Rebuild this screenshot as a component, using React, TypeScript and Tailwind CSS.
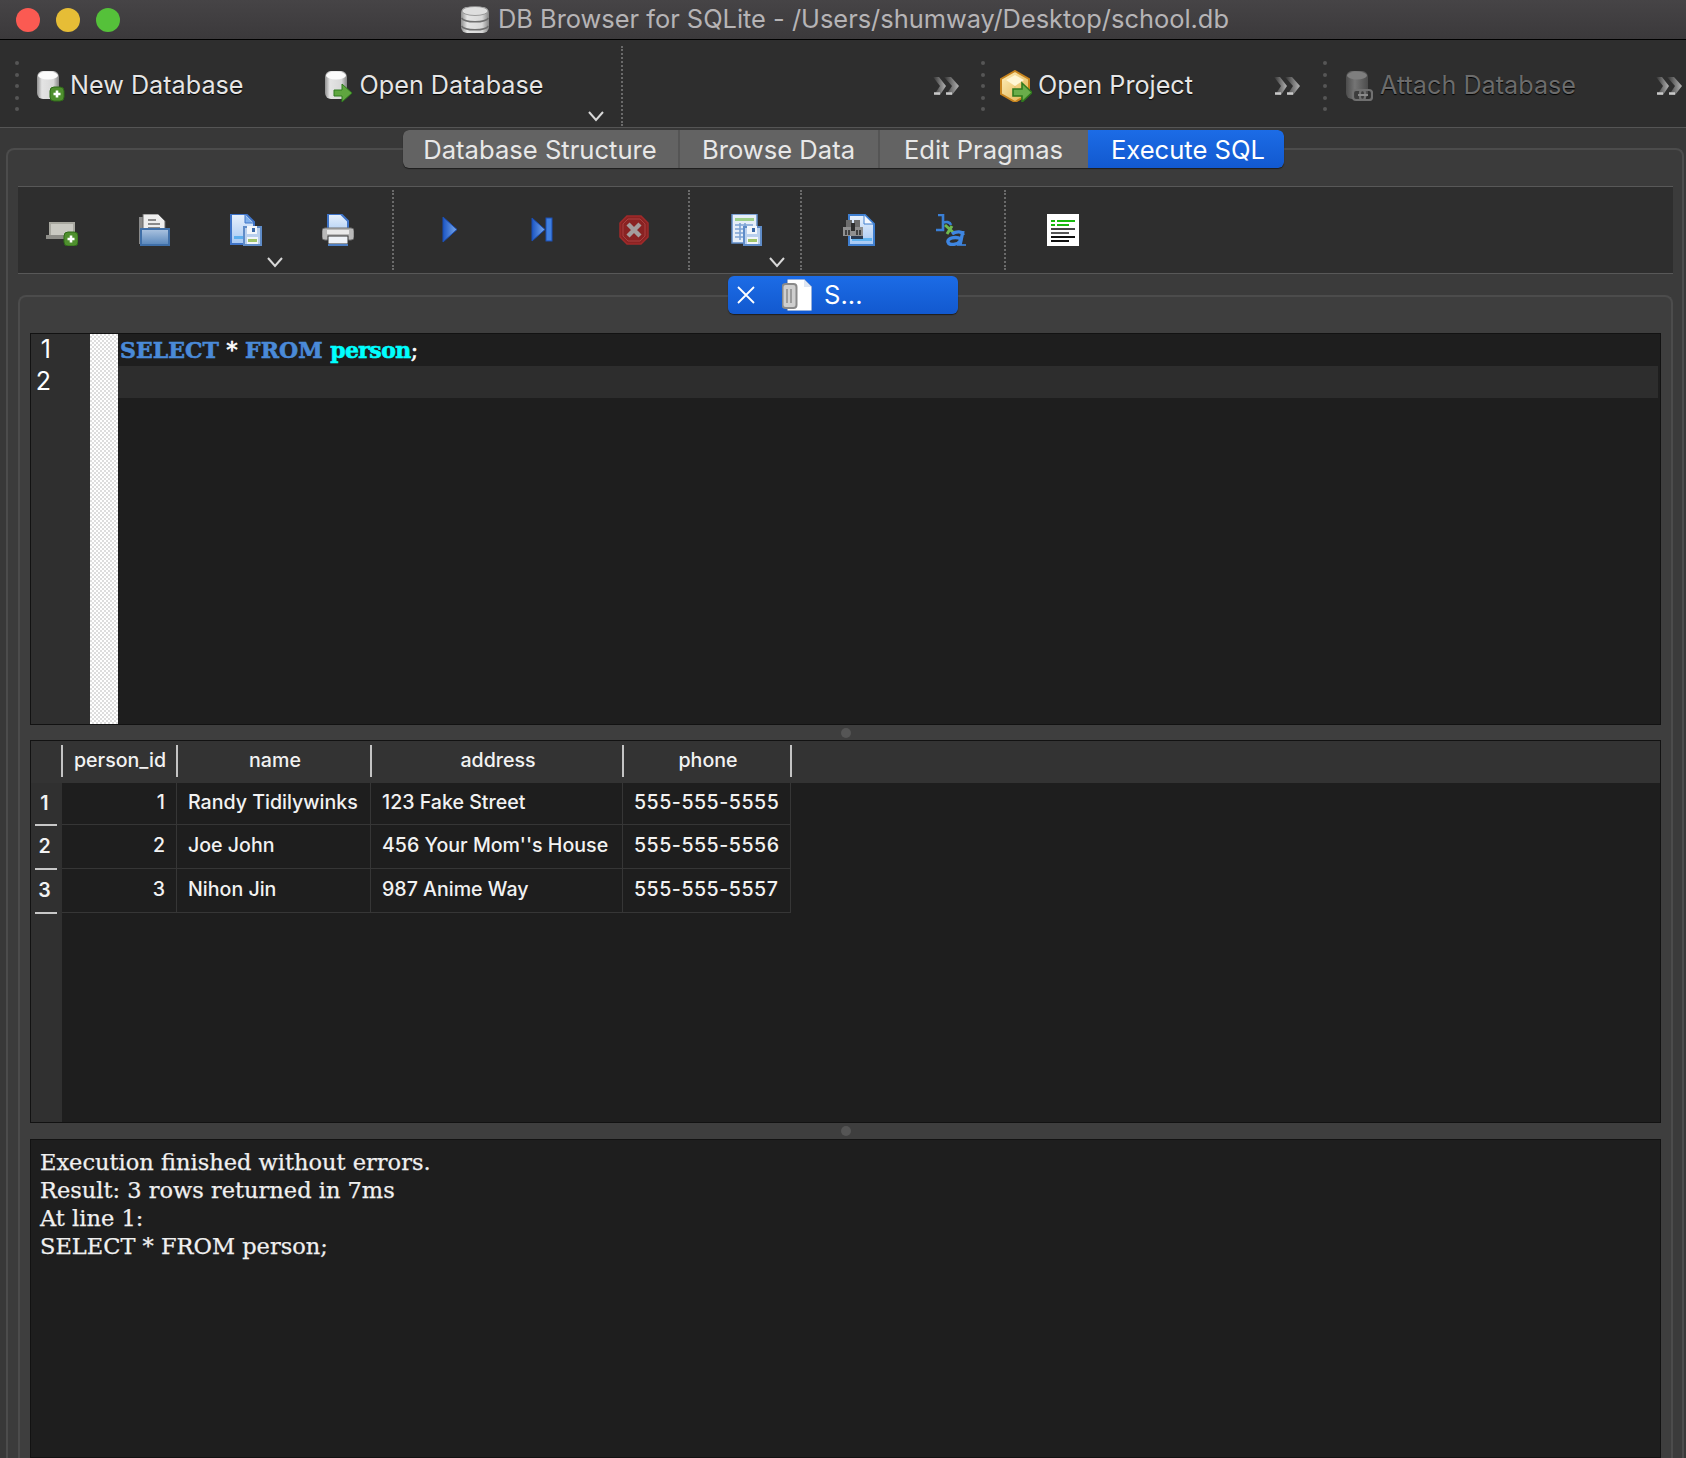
import React from "react";

const Defs = () => (
  <svg width="0" height="0" className="block h-0 w-0">
    <defs>
      <linearGradient id="cyl" x1="0" x2="1" y1="0" y2="0">
        <stop offset="0" stopColor="#8f8f8f" />
        <stop offset="0.22" stopColor="#e4e4e4" />
        <stop offset="0.75" stopColor="#d8d8d8" />
        <stop offset="1" stopColor="#858585" />
      </linearGradient>
      <linearGradient id="cylDim" x1="0" x2="1" y1="0" y2="0">
        <stop offset="0" stopColor="#4c4c4c" />
        <stop offset="0.4" stopColor="#757575" />
        <stop offset="1" stopColor="#4c4c4c" />
      </linearGradient>
      <linearGradient id="blueDoc" x1="0" x2="0" y1="0" y2="1">
        <stop offset="0" stopColor="#e8f1fc" />
        <stop offset="1" stopColor="#a6c8f3" />
      </linearGradient>
      <linearGradient id="panel" x1="0" x2="0" y1="0" y2="1">
        <stop offset="0" stopColor="#a7c0de" />
        <stop offset="1" stopColor="#5d8abd" />
      </linearGradient>
      <linearGradient id="play" x1="0" x2="1" y1="0" y2="0">
        <stop offset="0" stopColor="#1c56c4" />
        <stop offset="1" stopColor="#79a9ec" />
      </linearGradient>
      <linearGradient id="dbl" x1="0" x2="1" y1="0" y2="0">
        <stop offset="0" stopColor="#303030" />
        <stop offset="1" stopColor="#b4b4b4" />
      </linearGradient>
      <linearGradient id="pkg" x1="0" x2="1" y1="0" y2="1">
        <stop offset="0" stopColor="#fff0bd" />
        <stop offset="1" stopColor="#e0b04a" />
      </linearGradient>
    </defs>
  </svg>
);

const Floppy = ({ x, y }: { x: number; y: number }) => (
  <g transform={`translate(${x} ${y})`}>
    <rect x="0" y="0" width="19" height="20" fill="#5f8cc8" />
    <rect x="2" y="2" width="15" height="16" fill="#b9d0ee" />
    <rect x="4" y="0" width="10" height="8" fill="#f2f6fb" />
    <rect x="9" y="2" width="3" height="4" fill="#3b6aa8" />
    <rect x="4" y="11" width="11" height="7" fill="#f2f6fb" />
    <rect x="5" y="13" width="9" height="3" fill="#9fc46a" />
  </g>
);

const Badge = ({ x, y, r = 7 }: { x: number; y: number; r?: number }) => (
  <g>
    <rect x={x - r} y={y - r} width={r * 2} height={r * 2} rx="4" fill="#4f8f2e" stroke="#2f6a18" strokeWidth="1" />
    <path d={`M${x - 3.5} ${y}H${x + 3.5}M${x} ${y - 3.5}V${y + 3.5}`} stroke="#fff" strokeWidth="2.6" />
  </g>
);

const Cyl = ({ dim = false }: { dim?: boolean }) => (
  <g>
    <rect x="1" y="1" width="22" height="28" rx="6" fill={dim ? "url(#cylDim)" : "url(#cyl)"} />
    <ellipse cx="12" cy="5.5" rx="10" ry="4" fill={dim ? "#7e7e7e" : "#fbfbfb"} />
  </g>
);

const NewDbIcon = () => (
  <svg viewBox="0 0 30 32" className="h-[32px] w-[30px]">
    <Cyl />
    <Badge x={21} y={24} />
  </svg>
);

const OpenDbIcon = () => (
  <svg viewBox="0 0 30 32" className="h-[32px] w-[30px]">
    <Cyl />
    <path d="M10 20h8v-6l10 9-10 9v-6h-8z" fill="#5fa63f" stroke="#2f7a1e" strokeWidth="1" />
  </svg>
);

const ProjectIcon = () => (
  <svg viewBox="0 0 32 32" className="h-[32px] w-[32px]">
    <path d="M15 1l14 8v15l-14 8-14-8V9z" fill="url(#pkg)" stroke="#c8851f" strokeWidth="2" />
    <path d="M15 5l9 5-9 6-9-6z" fill="#fff6d4" />
    <path d="M15 16v11" stroke="#e7c270" strokeWidth="1.4" />
    <path d="M13 19h9v-6l10 9.5-10 9.5v-6h-9z" fill="#6aad4a" stroke="#2f7a1e" strokeWidth="1.6" />
  </svg>
);

const AttachIcon = () => (
  <svg viewBox="0 0 28 32" className="h-[32px] w-[28px]">
    <Cyl dim />
    <rect x="8" y="20" width="12" height="10" rx="3" fill="#3d3d3d" stroke="#707070" strokeWidth="2.2" />
    <rect x="15" y="20" width="12" height="10" rx="3" fill="none" stroke="#707070" strokeWidth="2.2" />
    <path d="M13 25h10" stroke="#8a8a8a" strokeWidth="2" />
  </svg>
);

const TitleDb = () => (
  <svg viewBox="0 0 30 30" className="h-[30px] w-[30px]">
    <rect x="1" y="2" width="28" height="26" rx="6" fill="url(#cyl)" />
    <ellipse cx="15" cy="6" rx="13" ry="4.5" fill="#dedede" stroke="#8a8a8a" strokeWidth="0.8" />
    <path d="M1.5 13c3 5 24 5 27 0M1.5 21c3 5 24 5 27 0" stroke="#6f6f6f" strokeWidth="1.6" fill="none" />
  </svg>
);

const AddTabIcon = () => (
  <svg viewBox="0 0 32 32" className="h-[32px] w-[32px]">
    <rect x="3" y="8" width="26" height="14" fill="#a8a8a0" />
    <rect x="5" y="10" width="22" height="11" fill="#c9c9c2" />
    <rect x="0" y="21" width="28" height="4" fill="#8d8d88" />
    <Badge x={25} y={25} />
  </svg>
);

const OpenSqlIcon = () => (
  <svg viewBox="0 0 32 32" className="h-[32px] w-[32px]">
    <path d="M1 3h5v27H1z" fill="#8a8a8a" />
    <path d="M5 0h15l7 7v11H5z" fill="#eeeeee" stroke="#666" strokeWidth="1" />
    <path d="M10 6h8M10 10h12M10 14h12" stroke="#8a8a8a" strokeWidth="2" />
    <rect x="2" y="14" width="30" height="18" fill="#3f6fa8" />
    <rect x="4" y="16" width="26" height="14" fill="url(#panel)" />
  </svg>
);

const SaveSqlIcon = () => (
  <svg viewBox="0 0 32 32" className="h-[32px] w-[32px]">
    <path d="M1 0h15l8 8v22H1z" fill="url(#blueDoc)" stroke="#3f74c8" strokeWidth="2" />
    <path d="M15 1v8h8" fill="#7fb0ec" stroke="#3f74c8" strokeWidth="1" />
    <rect x="4" y="22" width="12" height="3" fill="#5fb0ee" />
    <Floppy x={13} y={12} />
  </svg>
);

const PrintIcon = () => (
  <svg viewBox="0 0 32 32" className="h-[32px] w-[32px]">
    <path d="M6 0h13l7 7v15H6z" fill="url(#blueDoc)" stroke="#3f74c8" strokeWidth="2" />
    <rect x="0" y="14" width="32" height="12" rx="3" fill="#b9b9b9" stroke="#707070" strokeWidth="1" />
    <rect x="5" y="16" width="22" height="4" fill="#e9e9e9" />
    <rect x="6" y="22" width="20" height="8" fill="#eef2f7" stroke="#333" strokeWidth="1" />
    <rect x="6" y="30" width="20" height="2" fill="#4d7fc4" />
  </svg>
);

const PlayIcon = () => (
  <svg viewBox="0 0 32 32" className="h-[32px] w-[32px]">
    <path d="M9 3l14 12.5L9 28z" fill="url(#play)" stroke="#1a4eb4" strokeWidth="1" />
  </svg>
);

const StepIcon = () => (
  <svg viewBox="0 0 32 32" className="h-[32px] w-[32px]">
    <path d="M6 4l13 11.5L6 27z" fill="url(#play)" stroke="#1a4eb4" strokeWidth="1" />
    <rect x="20" y="4" width="6" height="23" fill="#3f7fe0" stroke="#1a4eb4" strokeWidth="1" />
  </svg>
);

const StopIcon = () => (
  <svg viewBox="0 0 32 32" className="h-[32px] w-[32px]">
    <path d="M9 2h14l7 7v14l-7 7H9l-7-7V9z" fill="#8a2222" stroke="#a02a2a" strokeWidth="1.5" />
    <path d="M5 10l5-5h12l5 5v12l-5 5H10l-5-5z" fill="none" stroke="#a84040" strokeWidth="1" />
    <path d="M10 10l12 12M22 10L10 22" stroke="#a39c9c" strokeWidth="4.4" />
  </svg>
);

const SaveResultIcon = () => (
  <svg viewBox="0 0 32 32" className="h-[32px] w-[32px]">
    <rect x="1" y="0" width="25" height="29" fill="#e6eef8" stroke="#5f8cc8" strokeWidth="1.5" />
    <rect x="4" y="4" width="19" height="3" fill="#9ccf8a" />
    <path d="M4 11h18M4 15h12M4 19h12M4 23h12M9 9v17M14 9v17" stroke="#7ea3d4" strokeWidth="1.6" />
    <Floppy x={12} y={12} />
  </svg>
);

const FindIcon = () => (
  <svg viewBox="0 0 32 32" className="h-[32px] w-[32px]">
    <path d="M6 1h16l9 9v21H6z" fill="url(#blueDoc)" stroke="#3f7fd0" strokeWidth="2" />
    <path d="M21 1v9h9" fill="#f4f8fe" stroke="#3f7fd0" strokeWidth="1" />
    <rect x="9" y="24" width="20" height="3" fill="#62b4f0" />
    <rect x="3" y="6" width="6" height="8" fill="#6c6c6c" />
    <rect x="11" y="6" width="6" height="8" fill="#6c6c6c" />
    <rect x="0" y="13" width="10" height="9" fill="#8f8f8f" />
    <rect x="10" y="13" width="10" height="9" fill="#8f8f8f" />
    <rect x="8" y="9" width="4" height="8" fill="#2e2e2e" />
    <path d="M3 16v5M6 16v5M14 16v5M17 16v5" stroke="#2e2e2e" strokeWidth="1.6" />
    <rect x="8" y="22" width="12" height="3" fill="#2a3a50" />
  </svg>
);

const ReplaceIcon = () => (
  <svg viewBox="0 0 32 32" className="h-[32px] w-[32px]">
    <path d="M3 1h5v15H1M8 9c3-2 7-1 8 2" fill="none" stroke="#3a7fd6" strokeWidth="2.6" />
    <path d="M10 11l9 8M17 12l-5 8" stroke="#6fb84e" strokeWidth="3" />
    <path d="M28 17l-3 14M17 20c4-3 11-3 11 1" fill="none" stroke="#3e86e2" strokeWidth="3.4" />
    <path d="M26 25c-5-3-14-1-13 3s10 3 13-2" fill="none" stroke="#3e86e2" strokeWidth="3.4" />
    <path d="M22 31h9" stroke="#3e86e2" strokeWidth="1.6" />
  </svg>
);

const OutputIcon = () => (
  <svg viewBox="0 0 32 32" className="h-[32px] w-[32px]">
    <rect x="0" y="0" width="32" height="32" fill="#ffffff" />
    <path d="M4 7h4M10 7h18M4 11h4M10 11h12" stroke="#18b80e" strokeWidth="2" />
    <path d="M4 15h24" stroke="#444" strokeWidth="2" />
    <path d="M4 19h18" stroke="#555" strokeWidth="2" />
    <path d="M4 23h24" stroke="#111" strokeWidth="2" />
    <path d="M4 27h18" stroke="#111" strokeWidth="2" />
  </svg>
);

const SqlTabDoc = () => (
  <svg viewBox="0 0 30 32" className="h-[32px] w-[30px]">
    <path d="M5 0h17l8 8v24H5z" fill="#ffffff" stroke="#2f63b8" strokeWidth="1" />
    <path d="M22 0v8h8" fill="#dfe6f2" />
    <rect x="0.5" y="5" width="14" height="24" rx="3" fill="#cfcfcf" stroke="#8a8a8a" strokeWidth="2" />
    <path d="M5 10v14M9 10v14" stroke="#8f8f8f" strokeWidth="1.6" />
  </svg>
);

const Chevron = ({ className }: { className: string }) => (
  <svg viewBox="0 0 18 12" className={`h-[12px] w-[18px] ${className}`}>
    <path d="M2 2l7 8 7-8" fill="none" stroke="#d8d8d8" strokeWidth="2" />
  </svg>
);

const More = () => (
  <svg viewBox="0 0 28 20" className="h-[20px] w-[28px]">
    <path d="M0 1h6l7 9-6 9H1l6-9z" fill="url(#dbl)" />
    <path d="M11 1h7l8 9-7 9h-6l6-9z" fill="url(#dbl)" />
    <path d="M1 17.5h6M13 17.5h6" stroke="#c8c8c8" strokeWidth="2.4" />
  </svg>
);

const Grip = () => (
  <div className="flex h-[50px] w-[4px] flex-col justify-between">
    {[0, 1, 2, 3, 4].map((i) => (
      <div key={i} className="h-[4px] w-[4px] rounded-full bg-[#565656]" />
    ))}
  </div>
);

const Dotted = () => <div className="h-[80px] w-0 self-center border-l-2 border-dotted border-[#6a6a6a]" />;

const ToolText = ({ children, dim = false }: { children: React.ReactNode; dim?: boolean }) => (
  <span
    className={`text-[25.2px] leading-none [text-shadow:0_1px_1px_#000] ${dim ? "text-[#6c6c6c]" : "text-[#e6e6e6]"}`}
  >
    {children}
  </span>
);

const MainTab = ({ label, w, active = false, first = false }: { label: string; w: string; active?: boolean; first?: boolean }) => (
  <div
    className={`flex h-full items-center justify-center pt-[1px] text-[25.6px] leading-none ${w} ${
      active
        ? "rounded-r-[6px] bg-gradient-to-b from-[#1c6ce6] to-[#1259cf] pl-[5px] text-white"
        : `bg-[#636363] text-[#e8e8e8] ${first ? "rounded-l-[6px]" : "border-l-2 border-[#555555]"}`
    }`}
  >
    {label}
  </div>
);

const rows = [
  ["1", "Randy Tidilywinks", "123 Fake Street", "555-555-5555", "h-[42px]"],
  ["2", "Joe John", "456 Your Mom''s House", "555-555-5556", "h-[44px]"],
  ["3", "Nihon Jin", "987 Anime Way", "555-555-5557", "h-[44px]"],
];

const HeadCell = ({ label, w }: { label: string; w: string }) => (
  <div className={`relative flex h-full items-center justify-center pb-[3px] ${w}`}>
    <span>{label}</span>
    <div className="absolute right-0 top-[4px] h-[32px] w-[2px] bg-[#c4c4c4]" />
  </div>
);

const Cell = ({ children, w, right = false }: { children: React.ReactNode; w: string; right?: boolean }) => (
  <div
    className={`flex h-full items-center border-r border-[#363636] px-[11px] pb-[2px] ${w} ${right ? "justify-end" : ""}`}
  >
    {children}
  </div>
);

export default function App() {
  return (
    <div className="flex h-[1458px] w-[1686px] flex-col overflow-hidden bg-[#383838] font-['Inter',sans-serif]">
      <Defs />
      {/* Title bar */}
      <div className="flex h-[40px] shrink-0 items-center border-b border-black bg-gradient-to-b from-[#464446] to-[#3b393b]">
        <div className="flex w-[460px] items-center gap-[16px] pl-[16px]">
          <div className="h-[24px] w-[24px] rounded-full bg-[#fb5a52]" />
          <div className="h-[24px] w-[24px] rounded-full bg-[#e6bd36]" />
          <div className="h-[24px] w-[24px] rounded-full bg-[#55c13a]" />
        </div>
        <TitleDb />
        <span className="mb-[2px] ml-[8px] text-[25.4px] leading-none text-[#b6b4b6]">DB Browser for SQLite - /Users/shumway/Desktop/school.db</span>
      </div>

      {/* Main toolbar */}
      <div className="flex h-[88px] shrink-0 border-b border-[#555555] bg-[#2e2e2e] pt-[5px]">
        <div className="flex w-[621px] items-center pl-[15px]">
          <Grip />
          <div className="ml-[17px] flex items-center gap-[4px]">
            <NewDbIcon />
            <ToolText>New Database</ToolText>
          </div>
          <div className="relative ml-[80px] flex items-center gap-[6px]">
            <OpenDbIcon />
            <ToolText>Open Database</ToolText>
          </div>
          <Chevron className="relative top-[30px] ml-[44px]" />
        </div>
        <Dotted />
        <div className="flex w-[343px] items-center justify-end pr-[5px]">
          <More />
        </div>
        <div className="flex w-[342px] items-center pl-[15px]">
          <Grip />
          <div className="ml-[15px] flex items-center gap-[6px]">
            <ProjectIcon />
            <ToolText>Open Project</ToolText>
          </div>
          <div className="ml-auto pr-[6px]">
            <More />
          </div>
        </div>
        <div className="flex flex-1 items-center pl-[15px]">
          <Grip />
          <div className="ml-[18px] flex items-center gap-[7px]">
            <AttachIcon />
            <ToolText dim>Attach Database</ToolText>
          </div>
          <div className="ml-auto pr-[2px]">
            <More />
          </div>
        </div>
      </div>

      {/* Main tabs */}
      <div className="relative z-10 mt-[2px] flex h-[38px] shrink-0 justify-center">
        <div className="flex h-full overflow-hidden rounded-[6px] shadow-[0_1px_1px_#1d1d1d]">
          <MainTab label="Database Structure" w="w-[275px]" first />
          <MainTab label="Browse Data" w="w-[200px]" />
          <MainTab label="Edit Pragmas" w="w-[210px]" />
          <MainTab label="Execute SQL" w="w-[196px]" active />
        </div>
      </div>

      {/* Outer pane */}
      <div className="-mt-[20px] ml-[6px] mr-[2px] flex flex-1 flex-col rounded-t-[8px] border-x-2 border-t-2 border-[#4c4c4c] bg-[#3b3b3b] pl-[10px] pr-[9px] pt-[36px]">
        {/* Secondary toolbar */}
        <div className="flex h-[88px] shrink-0 items-center border-y border-[#585858] bg-[#2e2e2e]">
          <div className="flex w-[374px] items-center gap-[60px] pl-[28px]">
            <AddTabIcon />
            <OpenSqlIcon />
            <div className="relative">
              <SaveSqlIcon />
              <Chevron className="absolute left-[36px] top-[42px]" />
            </div>
            <PrintIcon />
          </div>
          <Dotted />
          <div className="flex w-[294px] items-center gap-[60px] pl-[40px]">
            <PlayIcon />
            <StepIcon />
            <StopIcon />
          </div>
          <Dotted />
          <div className="flex w-[110px] items-center pl-[41px]">
            <div className="relative">
              <SaveResultIcon />
              <Chevron className="absolute left-[37px] top-[42px]" />
            </div>
          </div>
          <Dotted />
          <div className="flex w-[202px] items-center gap-[60px] pl-[41px]">
            <FindIcon />
            <ReplaceIcon />
          </div>
          <Dotted />
          <div className="pl-[41px]">
            <OutputIcon />
          </div>
        </div>

        {/* SQL tab */}
        <div className="relative z-10 mt-[2px] flex h-[38px] shrink-0 justify-center pr-[5px]">
          <div className="flex h-full w-[230px] items-center rounded-[6px] bg-gradient-to-b from-[#1c6ce6] to-[#1259cf] pl-[9px] shadow-[0_1px_1px_#1d1d1d]">
            <svg viewBox="0 0 18 18" className="h-[18px] w-[18px]">
              <path d="M1 1l16 16M17 1L1 17" stroke="#ffffff" strokeWidth="1.8" />
            </svg>
            <div className="ml-[27px]">
              <SqlTabDoc />
            </div>
            <span className="ml-[12px] text-[25.6px] leading-none text-white">S...</span>
          </div>
        </div>

        {/* Inner pane */}
        <div className="-mt-[19px] flex min-h-0 flex-1 flex-col rounded-t-[8px] border-x-2 border-t-2 border-[#4c4c4c] bg-[#3e3e3e] px-[10px] pt-[36px]">
          {/* Editor */}
          <div className="flex h-[392px] shrink-0 border border-[#121212] bg-[#1e1e1e]">
            <div className="flex w-[59px] flex-col bg-[#2f2f2f] pr-[39px] text-right text-[25px] text-white">
              <div className="flex h-[32px] items-center justify-end">1</div>
              <div className="flex h-[32px] items-center justify-end">2</div>
            </div>
            <div className="w-[28px] bg-[repeating-conic-gradient(#dddddd_0_25%,#ffffff_0_50%)] bg-[length:4px_4px]" />
            <div className="flex min-w-0 flex-1 flex-col pr-[2px] font-['DejaVu_Serif',serif] text-[22px]">
              <div className="flex h-[32px] items-center whitespace-pre pl-[2px] font-bold text-[#4a8ad8] [-webkit-text-stroke:0.6px]">
                SELECT <span className="font-normal text-white">*</span> FROM <span className="tracking-[-0.6px] text-[#00ffff]">person</span>
                <span className="font-normal text-white">;</span>
              </div>
              <div className="h-[32px] bg-[#2d2d2d]" />
            </div>
          </div>

          <div className="flex h-[15px] shrink-0 items-center justify-center">
            <div className="h-[10px] w-[10px] rounded-full bg-[#555555]" />
          </div>

          {/* Results table */}
          <div className="flex h-[383px] shrink-0 flex-col border border-[#121212] bg-[#1e1e1e] text-[19.6px] font-[450] leading-none text-[#f2f2f2]">
            <div className="flex h-[42px] shrink-0 items-center bg-[#333333]">
              <div className="relative h-full w-[31px]">
                <div className="absolute right-[-1px] top-[4px] h-[32px] w-[2px] bg-[#c4c4c4]" />
              </div>
              <HeadCell label="person_id" w="w-[116px]" />
              <HeadCell label="name" w="w-[194px]" />
              <HeadCell label="address" w="w-[252px]" />
              <HeadCell label="phone" w="w-[168px]" />
            </div>
            <div className="flex min-h-0 flex-1">
              <div className="flex w-[31px] shrink-0 flex-col bg-[#303030]">
                {rows.map((r) => (
                  <div key={r[0]} className={`relative flex items-center justify-center pb-[1px] pr-[4px] font-semibold ${r[4]}`}>
                    {r[0]}
                    <div className="absolute bottom-[-1px] left-[4px] h-[2px] w-[22px] bg-[#c8c8c8]" />
                  </div>
                ))}
              </div>
              <div className="flex flex-col">
                {rows.map((r) => (
                  <div key={r[0]} className={`flex border-b border-[#363636] ${r[4]}`}>
                    <Cell w="w-[115px]" right>{r[0]}</Cell>
                    <Cell w="w-[194px]"><span className="whitespace-nowrap">{r[1]}</span></Cell>
                    <Cell w="w-[252px]"><span className="whitespace-nowrap">{r[2]}</span></Cell>
                    <Cell w="w-[168px]"><span className="whitespace-nowrap tracking-[0.5px]">{r[3]}</span></Cell>
                  </div>
                ))}
              </div>
            </div>
          </div>

          <div className="flex h-[16px] shrink-0 items-center justify-center">
            <div className="h-[10px] w-[10px] rounded-full bg-[#555555]" />
          </div>

          {/* Log */}
          <div className="min-h-0 flex-1 border border-[#121212] bg-[#1e1e1e] pl-[9px] pt-[8px] font-['DejaVu_Serif',serif] text-[22.5px] leading-[28px] text-[#f0f0f0] [-webkit-text-stroke:0.25px]">
            <div>Execution finished without errors.</div>
            <div>Result: 3 rows returned in 7ms</div>
            <div>At line 1:</div>
            <div>SELECT * FROM person;</div>
          </div>
        </div>
      </div>
    </div>
  );
}
